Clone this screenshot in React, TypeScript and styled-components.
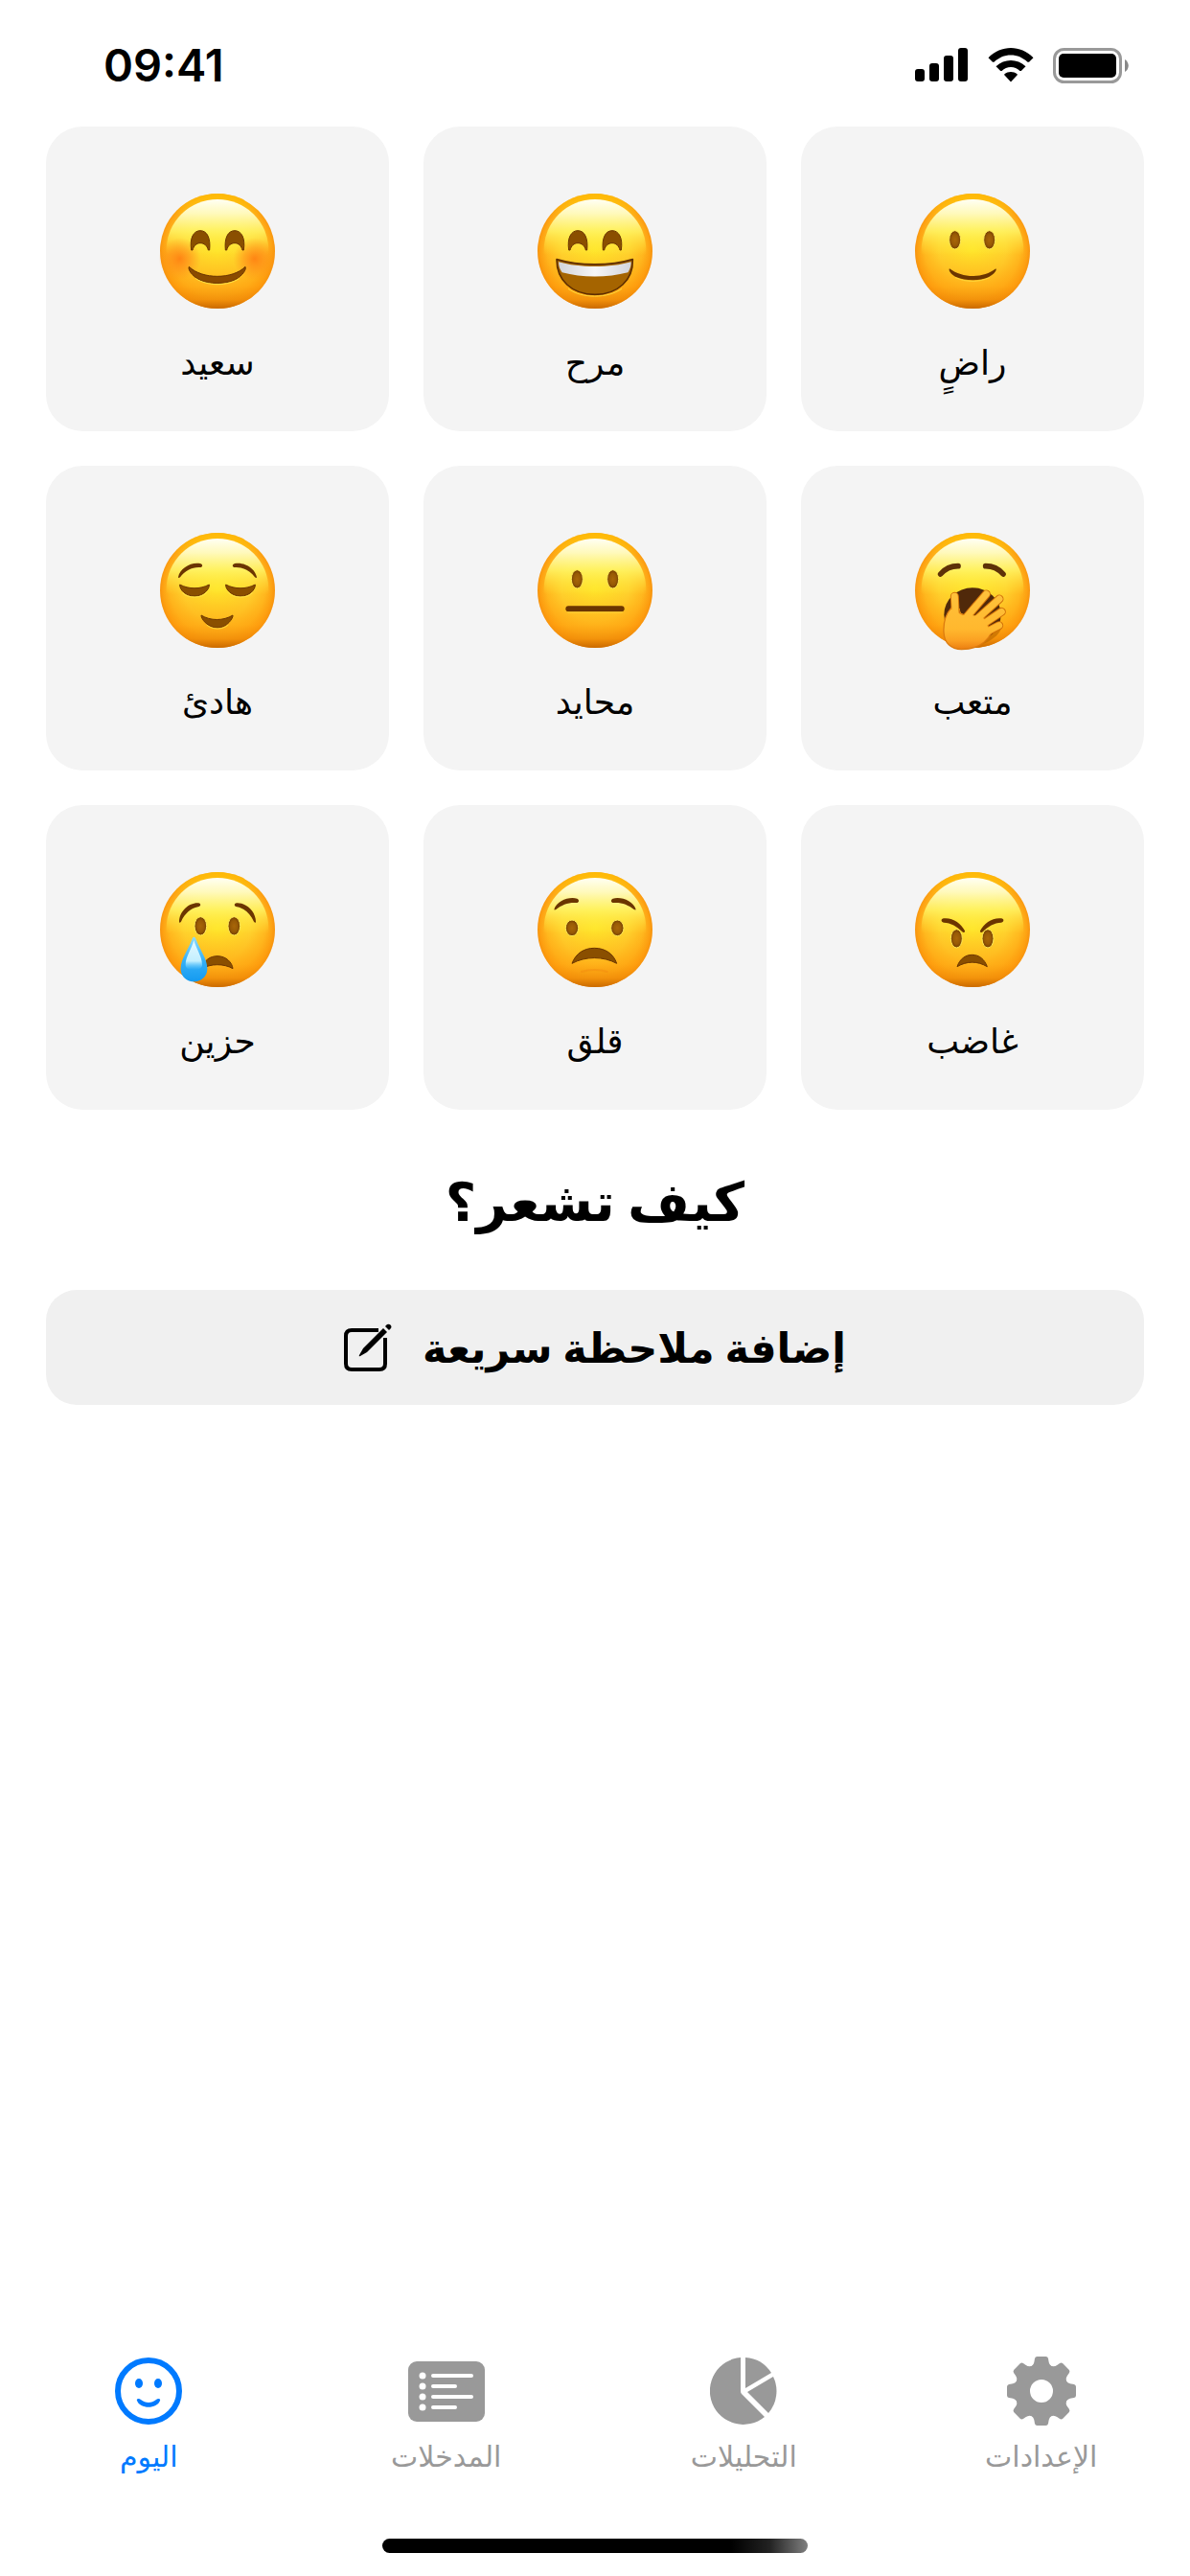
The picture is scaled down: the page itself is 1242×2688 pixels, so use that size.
import React, { useState } from "react";
import styled, { createGlobalStyle } from "styled-components";

const GlobalStyle = createGlobalStyle`
* { box-sizing: border-box; }
body {
    margin: 0;
    background: #fff;
    color: #000;
    font-family: Inter, "DejaVu Sans", sans-serif;
}
`;

const Screen = styled.div`
display: flex;
flex-direction: column;
min-height: 100vh;
`;

const StatusBar = styled.header`
display: flex;
align-items: center;
justify-content: space-between;
height: 132px;
padding: 4px 64px 0 108px;
`;

const Clock = styled.time`
font-size: 47px;
font-weight: 600;
line-height: 60px;
`;

const StatusIcons = styled.div`
display: flex;
align-items: center;
gap: 20px;
`;

const Main = styled.main`
display: flex;
flex-direction: column;
padding: 0 48px;
`;

const MoodGrid = styled.div`
display: grid;
grid-template-columns: repeat(3, 1fr);
gap: 36px;
`;

const MoodCard = styled.button`
display: flex;
flex-direction: column;
align-items: center;
gap: 26px;
padding: 70px 16px 42px;
border: 0;
border-radius: 38px;
background: #f4f4f4;
color: #000;
font-family: inherit;
cursor: pointer;
`;

const MoodLabel = styled.span`
font-size: 36px;
line-height: 60px;
`;

const Face = styled.svg`
width: 120px;
height: 120px;
overflow: visible;
`;

const Title = styled.h1`
margin: 52px 0 48px;
font-size: 56px;
font-weight: 700;
line-height: 88px;
text-align: center;
`;

const NoteButton = styled.button`
display: flex;
align-items: center;
justify-content: center;
gap: 32px;
padding: 30px;
border: 0;
border-radius: 32px;
background: #f0f0f0;
color: #000;
font-family: inherit;
font-size: 43px;
font-weight: 600;
line-height: 60px;
cursor: pointer;
`;

const TabBar = styled.nav`
display: grid;
grid-template-columns: repeat(4, 1fr);
margin-top: auto;
padding-bottom: 62px;
`;

const Tab = styled.a<{ $active: boolean }>`
display: flex;
flex-direction: column;
align-items: center;
gap: 8px;
color: ${ ({$active}) => $active ? "#007aff" : "#999" };
font-size: 30px;
line-height: 48px;
text-decoration: none;
`;

const HomeIndicator = styled.div`
align-self: center;
width: 444px;
height: 15px;
margin-bottom: 24px;
border-radius: 8px;
background: linear-gradient(90deg, #000 82%, #222 91%, #808080);
`;

const DARK = "#6b3500";
const EYE = "#8a4f00";

/* shared paint for all of the faces */
const Paint = () => <svg width="0" height="0" style={{position:"absolute"}} aria-hidden="true">
    <defs>
        <radialGradient id="skin" cx="0.5" cy="0.48" r="0.53">
            <stop offset="0" stopColor="#ffe52a"/>
            <stop offset="0.55" stopColor="#ffd22e"/>
            <stop offset="0.78" stopColor="#ffba20"/>
            <stop offset="0.9" stopColor="#fda012"/>
            <stop offset="1" stopColor="#ee820a"/>
        </radialGradient>
        <linearGradient id="shade" x1="0" y1="0" x2="0" y2="1">
            <stop offset="0" stopColor="#ffc400" stopOpacity="0.7"/>
            <stop offset="0.2" stopColor="#ffd400" stopOpacity="0"/>
            <stop offset="0.5" stopColor="#ff9d0c" stopOpacity="0"/>
            <stop offset="0.8" stopColor="#ff9d0c" stopOpacity="0.55"/>
            <stop offset="0.92" stopColor="#f08c08" stopOpacity="0.8"/>
            <stop offset="1" stopColor="#c96a00"/>
        </linearGradient>
        <linearGradient id="shine" x1="0" y1="0" x2="0" y2="1">
            <stop offset="0" stopColor="#fffff4"/>
            <stop offset="0.14" stopColor="#fffcc4" stopOpacity="0.95"/>
            <stop offset="0.32" stopColor="#fff767" stopOpacity="0.8"/>
            <stop offset="0.55" stopColor="#ffee3a" stopOpacity="0"/>
        </linearGradient>
        <radialGradient id="blush">
            <stop offset="0" stopColor="#ff7a10" stopOpacity="0.85"/>
            <stop offset="0.5" stopColor="#ff8416" stopOpacity="0.5"/>
            <stop offset="1" stopColor="#ff8a1a" stopOpacity="0"/>
        </radialGradient>
        <linearGradient id="teeth" x1="0" y1="0" x2="1" y2="0">
            <stop offset="0" stopColor="#d2d4da"/>
            <stop offset="0.5" stopColor="#f6f6f8"/>
            <stop offset="1" stopColor="#d2d4da"/>
        </linearGradient>
        <linearGradient id="tear" x1="0" y1="0" x2="0" y2="1">
            <stop offset="0" stopColor="#8fdcff"/>
            <stop offset="0.5" stopColor="#38b2f8"/>
            <stop offset="1" stopColor="#149af0"/>
        </linearGradient>
        <linearGradient id="tearShine" x1="0" y1="0" x2="0" y2="1">
            <stop offset="0" stopColor="#e6f9ff"/>
            <stop offset="0.7" stopColor="#c2efff"/>
            <stop offset="1" stopColor="#6fd0ff" stopOpacity="0"/>
        </linearGradient>
        <linearGradient id="hand" gradientUnits="userSpaceOnUse" x1="150" y1="180" x2="150" y2="366">
            <stop offset="0" stopColor="#ffc23c"/>
            <stop offset="0.65" stopColor="#ffb82e"/>
            <stop offset="0.85" stopColor="#fba022"/>
            <stop offset="1" stopColor="#ea7c10"/>
        </linearGradient>
        <radialGradient id="eye">
            <stop offset="0" stopColor="#a86608"/>
            <stop offset="0.6" stopColor="#985a06"/>
            <stop offset="1" stopColor="#743e00"/>
        </radialGradient>
    </defs>
</svg>;

const Head = () => <g>
    <circle cx="180" cy="180" r="180" fill="url(#skin)"/>
    <circle cx="180" cy="180" r="180" fill="url(#shade)"/>
    <ellipse cx="180" cy="176" rx="160" ry="158" fill="url(#shine)"/>
</g>;

const Eyes = ({x1, x2, y, rx = 18, ry = 29}:{x1:number, x2:number, y:number, rx?:number, ry?:number}) => <g fill="url(#eye)" stroke="#ffe95a" strokeWidth="3">
    <ellipse cx={x1} cy={y} rx={rx} ry={ry}/>
    <ellipse cx={x2} cy={y} rx={rx} ry={ry}/>
</g>;

/* draws its children a second time, flipped around the middle of the face */
const Mirror = ({children, axis = 180}:{children:React.ReactNode, axis?:number}) => <g>
    {children}
    <g transform={`matrix(-1 0 0 1 ${axis*2} 0)`}>{children}</g>
</g>;

const SmileEye = () => <path fill={EYE} stroke={DARK} strokeWidth="3" strokeLinejoin="round" d="M98 177C92 138 106 116 126 116C148 116 159 140 155 177L151 177C148 163 138 155 126 155C114 155 105 164 102 177Z"/>;

const Happy = () => <g>
    <circle cx="62" cy="204" r="66" fill="url(#blush)"/>
    <circle cx="296" cy="204" r="66" fill="url(#blush)"/>
    <Mirror><SmileEye/></Mirror>
    <path fill="#8a4a00" stroke={DARK} strokeWidth="3" strokeLinejoin="round" d="M91 229C132 269 227 269 267 229C272 236 259 257 236 269C206 284 152 284 124 270C100 258 86 237 91 229Z"/>
    <path fill="none" stroke="#ffe042" strokeWidth="3" d="M112 266C148 290 212 290 248 266"/>
</g>;

const Cheerful = () => <g>
    <Mirror><SmileEye/></Mirror>
    <path fill="#a56400" stroke="#5f2f00" strokeWidth="5" strokeLinejoin="round" d="M60 206C130 227 228 227 298 206C300 270 252 316 180 316C106 316 60 270 60 206Z"/>
    <path fill="url(#teeth)" d="M66 214C130 233 228 233 293 214C293 228 288 241 283 247C220 264 138 264 77 247C70 238 66 226 66 214Z"/>
    <path fill="none" stroke="#ffd83a" strokeWidth="3" d="M96 298C140 329 218 329 264 298"/>
</g>;

const Content = () => <g>
    <Eyes x1={125} x2={233} y={145}/>
    <path fill={DARK} d="M108 235C150 266 213 266 253 235C258 240 246 254 230 262C202 274 158 274 130 262C114 254 103 240 108 235Z"/>
    <path fill="none" stroke="#ffd53a" strokeWidth="3" d="M126 263C160 278 200 278 234 263"/>
</g>;

const Calm = () => <g>
    <Mirror>
        <path fill={DARK} d="M57 139C62 110 98 90 126 96C136 99 134 109 124 108C100 107 78 119 63 139C60 142 57 142 57 139Z"/>
        <path fill={EYE} stroke={DARK} strokeWidth="3" strokeLinejoin="round" d="M62 162C90 177 126 177 154 162C156 176 136 198 108 198C80 198 61 178 62 162Z"/>
        <path fill="none" stroke="#ffe44a" strokeWidth="3" d="M70 188C88 206 130 206 148 186"/>
    </Mirror>
    <path fill={EYE} stroke={DARK} strokeWidth="3" strokeLinejoin="round" d="M129 258C158 276 198 276 228 258C230 266 210 297 180 297C148 297 128 268 129 258Z"/>
    <path fill="none" stroke="#ffd83a" strokeWidth="3" d="M146 288C164 304 196 304 214 288"/>
</g>;

const Neutral = () => <g>
    <Eyes x1={124} x2={236} y={145}/>
    <rect x="88" y="229" width="184" height="18" rx="9" fill={DARK}/>
    <path fill="none" stroke="#ffd53a" strokeWidth="3" d="M94 249H266"/>
</g>;

const Fingers = () => <g fill="none" strokeLinecap="round" strokeLinejoin="round">
    <path d="M124 199L128 290"/>
    <path d="M223 192L158 268"/>
    <path d="M264 207L176 286"/>
    <path d="M271 247L186 304"/>
    <path d="M263 290L186 330"/>
</g>;

const Tired = () => <g>
    <g fill="none" stroke="#5e3208" strokeWidth="17" strokeLinecap="round">
        <path d="M80 129C94 113 114 104 135 104"/>
        <path d="M276 129C262 113 242 104 221 104"/>
    </g>
    <path fill="#c06c00" opacity="0.7" d="M180 356C230 350 280 314 270 280L200 320Z"/>
    <ellipse cx="180" cy="256" rx="89" ry="84" fill="#50290a"/>
    <g stroke="#d07008" strokeWidth="27"><Fingers/></g>
    <path fill="url(#hand)" stroke="#dd7c10" strokeWidth="4" d="M113 236C97 254 88 280 90 312C92 344 112 365 146 365C188 365 222 346 240 312L214 262L160 262Z"/>
    <g stroke="url(#hand)" strokeWidth="21"><Fingers/></g>
    <path fill="url(#hand)" d="M118 244L138 262L162 256L206 262L214 312C196 340 150 344 116 318Z"/>
    <path fill="none" stroke="#ee9418" strokeWidth="3" strokeLinecap="round" d="M139 238C140 250 144 256 154 256"/>
</g>;

const Sad = () => <g>
    <Mirror>
        <path fill={DARK} d="M60 156C60 122 92 95 120 97C130 99 128 108 119 109C96 113 78 130 66 155C63 159 60 159 60 156Z"/>
    </Mirror>
    <Eyes x1={127} x2={232} y={169} rx={19}/>
    <path fill={EYE} stroke={DARK} strokeWidth="3" strokeLinejoin="round" d="M130 303C138 276 156 263 180 263C208 263 226 284 228 302C200 286 158 286 130 303Z"/>
    <path fill="url(#tear)" d="M106 203C110 203 112 208 114 214C124 242 148 272 148 302C148 326 130 343 106 343C82 343 65 326 65 302C65 272 89 242 99 214C101 208 103 203 106 203Z"/>
    <path fill="url(#tearShine)" d="M106 214C113 238 132 266 132 290C132 302 120 306 106 306C92 306 80 302 80 290C80 266 100 238 106 214Z"/>
</g>;

const Worried = () => <g>
    <Mirror>
        <path fill={DARK} d="M52 117C60 90 98 76 124 83C132 87 130 96 122 96C98 94 76 102 58 117C55 119 52 119 52 117Z"/>
    </Mirror>
    <Eyes x1={108} x2={250} y={175} rx={20} ry={25}/>
    <path fill={EYE} stroke={DARK} strokeWidth="3" strokeLinejoin="round" d="M108 286C120 254 146 238 178 238C212 238 238 256 248 286C206 263 150 263 108 286Z"/>
    <path fill="none" stroke="#f28a10" strokeWidth="6" strokeLinecap="round" opacity="0.45" d="M138 312C162 304 196 304 218 312"/>
</g>;

const Angry = () => <g>
    <Mirror>
        <path fill={DARK} d="M90 145C118 142 144 160 156 184C157 190 151 190 147 186C132 170 112 159 90 158C80 156 81 146 90 145Z"/>
    </Mirror>
    <Eyes x1={130} x2={228} y={208}/>
    <path fill={EYE} stroke={DARK} strokeWidth="3" strokeLinejoin="round" d="M132 296C140 272 158 259 179 259C202 259 218 274 226 296C196 278 162 278 132 296Z"/>
</g>;

type Mood = {label:string, Draw:() => React.ReactElement}
const Moods:Array<Mood> = [
    {label:"سعيد", Draw:Happy},
    {label:"مرح", Draw:Cheerful},
    {label:"راضٍ", Draw:Content},
    {label:"هادئ", Draw:Calm},
    {label:"محايد", Draw:Neutral},
    {label:"متعب", Draw:Tired},
    {label:"حزين", Draw:Sad},
    {label:"قلق", Draw:Worried},
    {label:"غاضب", Draw:Angry},
];

const SmileIcon = () => <svg width="70" height="72" viewBox="0 0 70 72" fill="currentColor">
    <circle cx="35" cy="36" r="32" fill="none" stroke="currentColor" strokeWidth="6"/>
    <ellipse cx="25" cy="28" rx="4" ry="5"/>
    <ellipse cx="45" cy="28" rx="4" ry="5"/>
    <path d="M23 46C22 44 25 43 27 45C32 49 38 49 43 45C45 43 48 44 47 46C44 55 26 55 23 46Z"/>
</svg>;

const ListIcon = () => <svg width="80" height="72" viewBox="0 0 80 72" fill="currentColor">
    <rect y="5" width="80" height="63" rx="9"/>
    <g fill="#fff">
        {[20, 31, 42, 53].map( (y, i) => <React.Fragment key={y}>
            <circle cx="15" cy={y} r="3.5"/>
            <rect x="24" y={y-2} width={i % 2 ? 27 : 44} height="4" rx="2"/>
        </React.Fragment> )}
    </g>
</svg>;

const PieIcon = () => <svg width="70" height="72" viewBox="0 0 70 72" fill="currentColor">
    <path d="M32 1A35 35 0 1 0 57 63L33 39Q32 38 32 36Z"/>
    <path d="M37 1A35 35 0 0 1 64 17L37 33Z"/>
    <path d="M66 21A35 35 0 0 1 61 59L39 37Z"/>
</svg>;

const GearIcon = () => <svg width="72" height="72" viewBox="-36 -36 72 72" fill="currentColor">
    <circle r="20" fill="none" stroke="currentColor" strokeWidth="16"/>
    {[0, 45, 90, 135, 180, 225, 270, 315].map( a =>
        <path key={a} transform={`rotate(${a})`} d="M-12 -25Q-8 -27 -7.500 -31L-7 -34Q-6.500 -36 -4.500 -36H4.500Q6.500 -36 7 -34L7.500 -31Q8 -27 12 -25Z"/>
    )}
</svg>;

type TabItem = {id:string, label:string, Icon:() => React.ReactElement}
const Tabs:Array<TabItem> = [
    {id:"today", label:"اليوم", Icon:SmileIcon},
    {id:"entries", label:"المدخلات", Icon:ListIcon},
    {id:"analytics", label:"التحليلات", Icon:PieIcon},
    {id:"settings", label:"الإعدادات", Icon:GearIcon},
];

const Signal = () => <svg width="56" height="36" viewBox="0 0 56 36">
    <rect x="0" y="22" width="10" height="13" rx="3"/>
    <rect x="15" y="16" width="10" height="19" rx="3"/>
    <rect x="30" y="8" width="10" height="27" rx="3"/>
    <rect x="45" y="0" width="10" height="35" rx="3"/>
</svg>;

const Wifi = () => <svg width="48" height="36" viewBox="0 0 48 36">
    <path d="M24 7.500C30.500 7.500 36.500 10 41.500 14.800L43 14.800L47.500 10.200C34 -3.400 14 -3.400 0.500 10.200L5 14.800L6.500 14.800C11.500 10 17.500 7.500 24 7.500Z"/>
    <path d="M24 20C27.500 20 30.800 21.500 33.400 24L34.800 24L39.500 19.200C30.500 10.900 17.500 10.900 8.500 19.200L13.200 24L14.600 24C17.200 21.500 20.500 20 24 20Z"/>
    <path d="M30.500 28.500C31 28 31 27.500 30.500 27.200C27 24.300 21 24.300 17.500 27.200C17 27.500 17 28 17.500 28.500L24 35.500Z"/>
</svg>;

const Battery = () => <svg width="79" height="37" viewBox="0 0 79 37">
    <rect x="1.500" y="1.500" width="69" height="34" rx="10" fill="none" stroke="#999" strokeWidth="3"/>
    <rect x="6" y="6" width="60" height="25" rx="5"/>
    <path d="M75 12C80 15 80 22 75 25Z" fill="#888"/>
</svg>;

const Compose = () => <svg width="50" height="50" viewBox="0 0 50 50" fill="none" stroke="currentColor" strokeWidth="4" aria-hidden="true">
    <path d="M36 7H8Q2 7 2 13V42Q2 48 8 48H37Q43 48 43 42V15"/>
    <path fill="currentColor" stroke="none" d="M41 5L45 9L24 30L17 34Q15 35 16 33L20 26Z"/>
    <path fill="currentColor" stroke="none" d="M43 3L45 1Q47 0 49 2Q50 4 49 5L47 7Z"/>
</svg>;

export default ( ) =>
{
    const [tab, setTab] = useState("today");

    return <Screen>
        <GlobalStyle/>
        <Paint/>
        <StatusBar>
            <Clock>09:41</Clock>
            <StatusIcons>
                <Signal/>
                <Wifi/>
                <Battery/>
            </StatusIcons>
        </StatusBar>
        <Main>
            <MoodGrid>
                { Moods.map( ({label, Draw}:Mood) => <MoodCard key={label} type="button">
                    <Face viewBox="0 0 360 360" aria-hidden="true">
                        <Head/>
                        <Draw/>
                    </Face>
                    <MoodLabel dir="rtl">{label}</MoodLabel>
                </MoodCard> ) }
            </MoodGrid>
            <Title dir="rtl">كيف تشعر؟</Title>
            <NoteButton type="button" dir="rtl">
                <span>إضافة ملاحظة سريعة</span>
                <Compose/>
            </NoteButton>
        </Main>
        <TabBar>
            { Tabs.map( ({id, label, Icon}:TabItem) => <Tab key={id} href={"#" + id} $active={ tab === id } onClick={ () => setTab(id) }>
                <Icon/>
                <span dir="rtl">{label}</span>
            </Tab> ) }
        </TabBar>
        <HomeIndicator/>
    </Screen>;
}
